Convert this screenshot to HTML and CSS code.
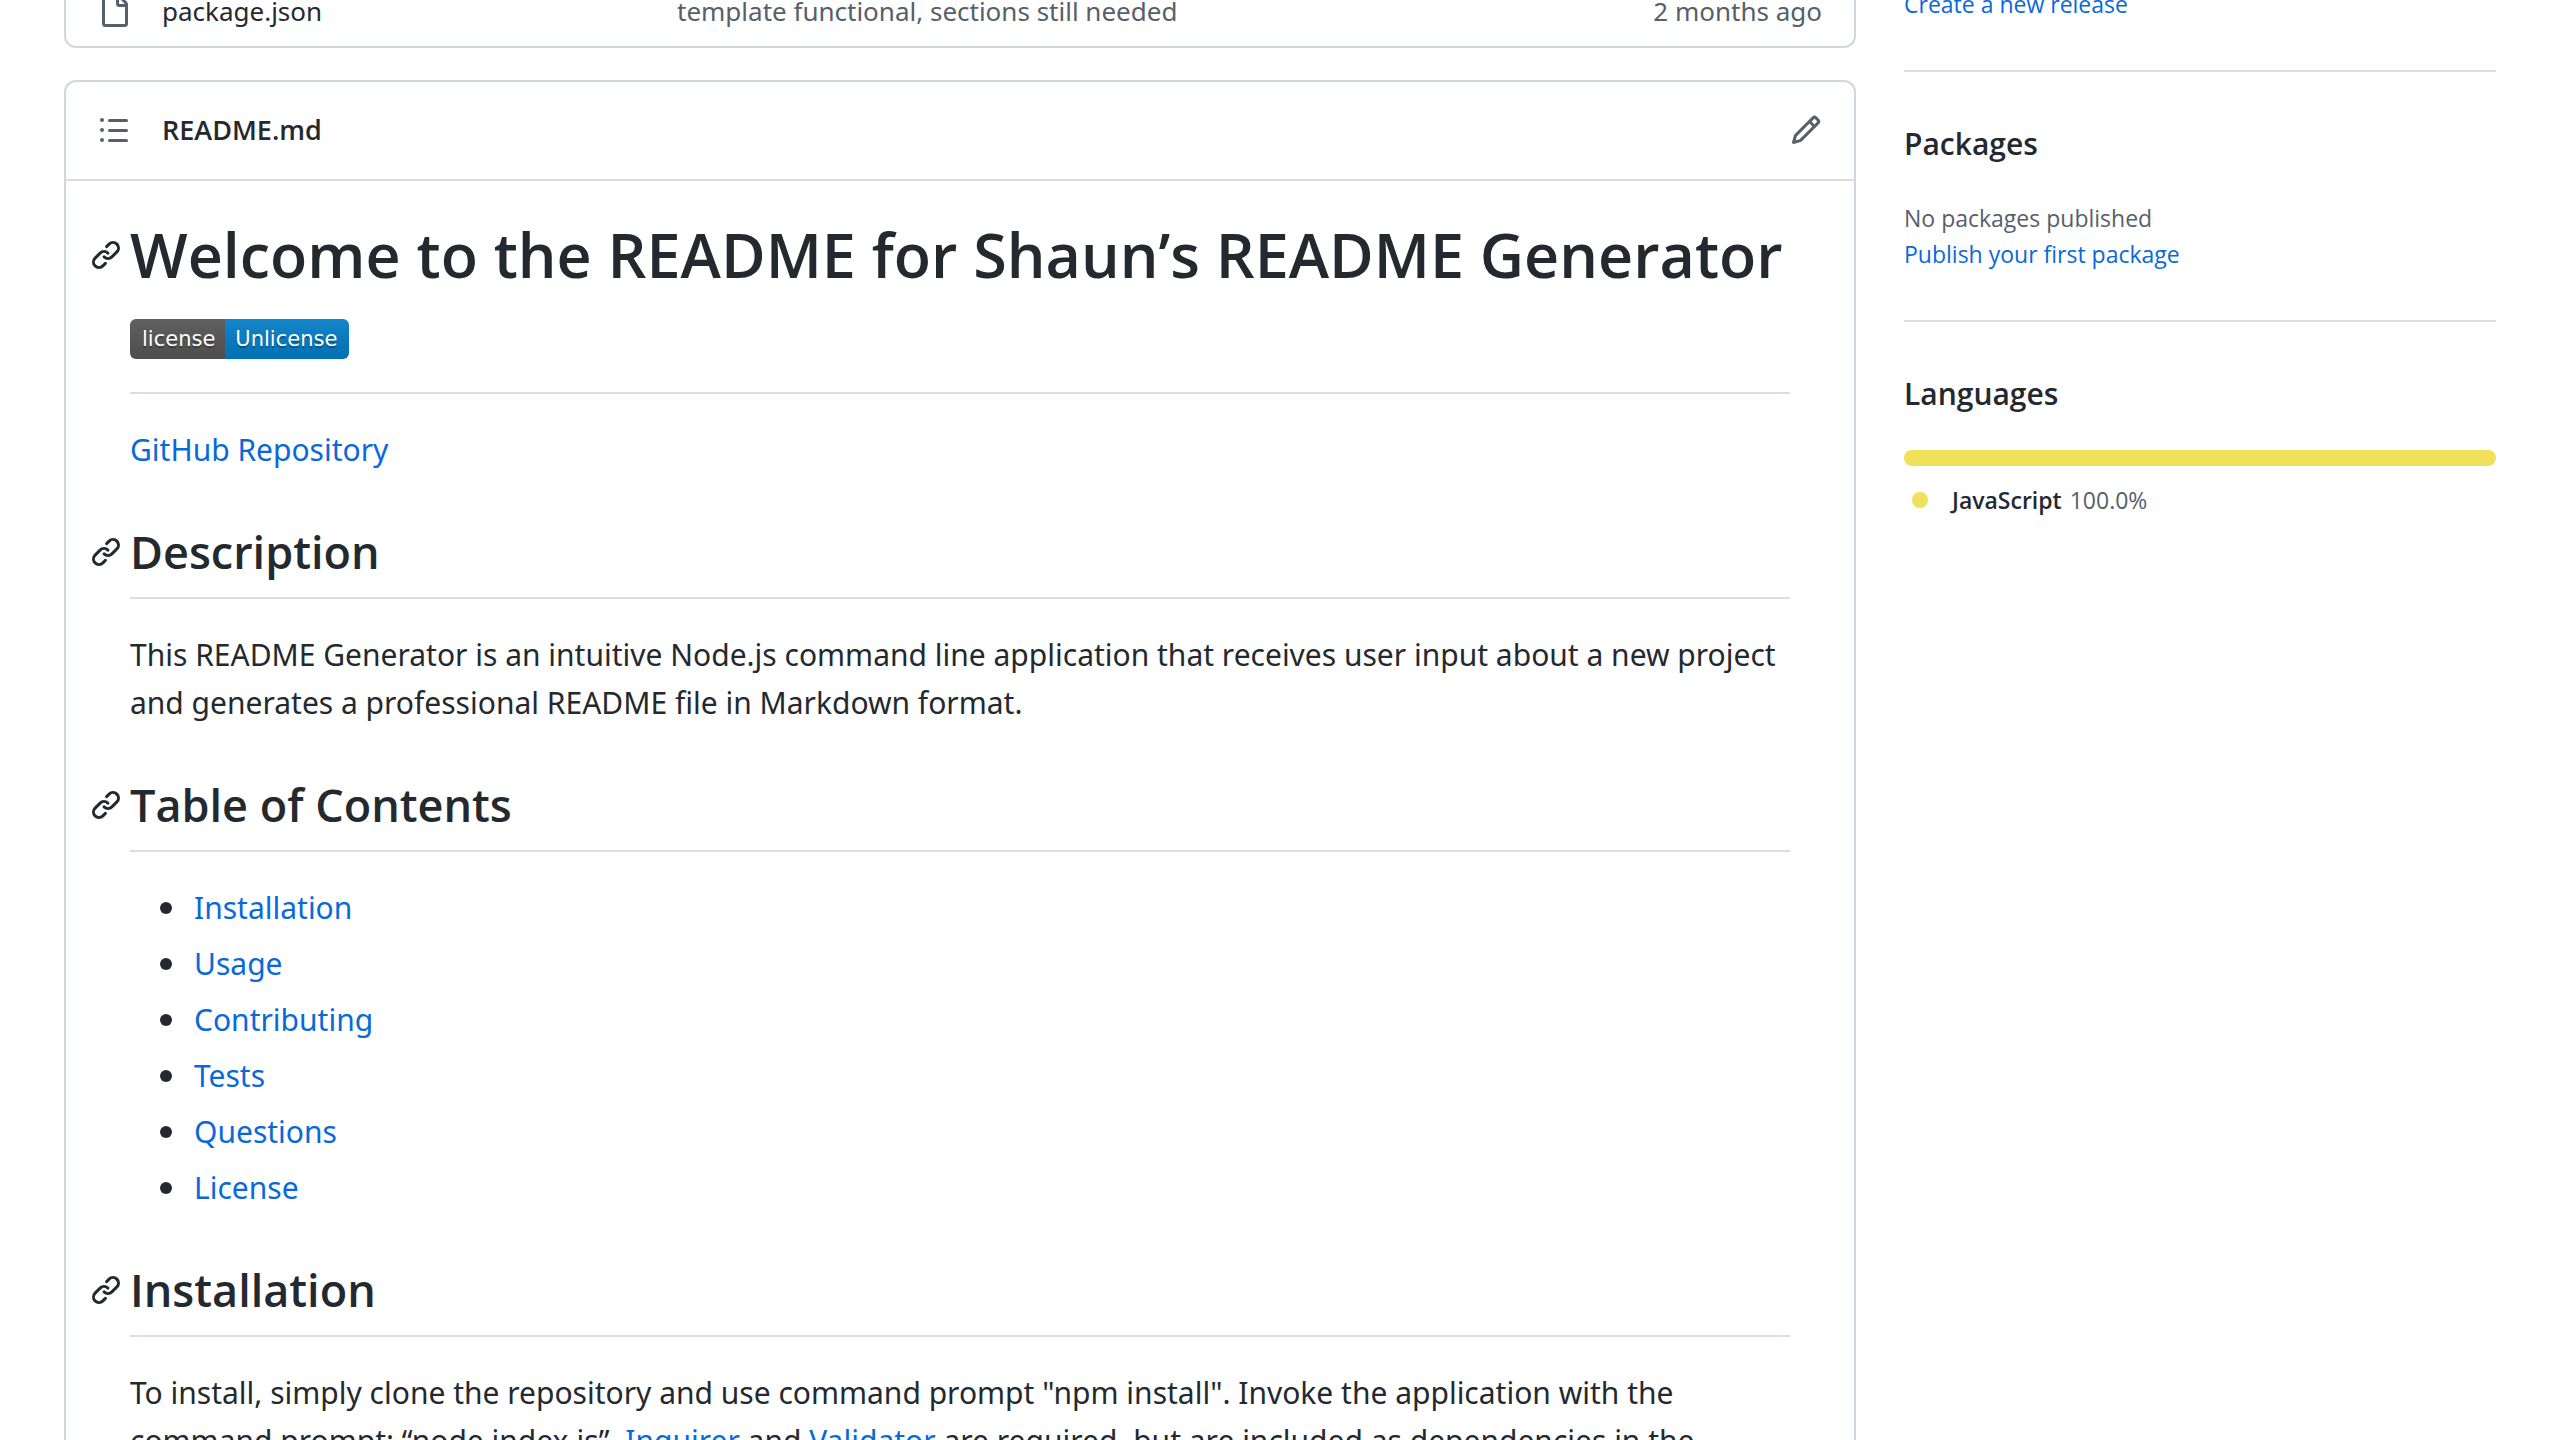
FILE: index.html
```html
<!DOCTYPE html>
<html lang="en">
<head>
<meta charset="utf-8">
<title>README Generator</title>
<link rel="stylesheet" href="styles.css">
</head>
<body>
<svg class="sprite" aria-hidden="true">
  <symbol id="icon-link" viewBox="0 0 16 16"><path d="m7.775 3.275 1.25-1.25a3.5 3.5 0 1 1 4.95 4.95l-2.5 2.5a3.5 3.5 0 0 1-4.95 0 .751.751 0 0 1 .018-1.042.751.751 0 0 1 1.042-.018 1.998 1.998 0 0 0 2.83 0l2.5-2.5a2.002 2.002 0 0 0-2.83-2.83l-1.25 1.25a.751.751 0 0 1-1.042-.018.751.751 0 0 1-.018-1.042Zm-4.69 9.64a1.998 1.998 0 0 0 2.83 0l1.25-1.25a.751.751 0 0 1 1.042.018.751.751 0 0 1 .018 1.042l-1.25 1.25a3.5 3.5 0 1 1-4.95-4.95l2.5-2.5a3.5 3.5 0 0 1 4.95 0 .751.751 0 0 1-.018 1.042.751.751 0 0 1-1.042.018 1.998 1.998 0 0 0-2.83 0l-2.5 2.5a1.998 1.998 0 0 0 0 2.83Z"/></symbol>
</svg>
<div class="page">
  <main class="main">
    <div class="card files">
      <table class="file-table">
        <tr>
          <td class="file-icon"><svg class="icon" viewBox="0 0 16 16" aria-hidden="true"><path d="M2 1.75C2 .784 2.784 0 3.75 0h6.586c.464 0 .909.184 1.237.513l2.914 2.914c.329.328.513.773.513 1.237v9.586A1.75 1.75 0 0 1 13.25 16h-9.5A1.75 1.75 0 0 1 2 14.25Zm1.75-.25a.25.25 0 0 0-.25.25v12.5c0 .138.112.25.25.25h9.5a.25.25 0 0 0 .25-.25V6h-2.75A1.75 1.75 0 0 1 9 4.25V1.5Zm6.75.062V4.25c0 .138.112.25.25.25h2.688l-.011-.013-2.914-2.914-.013-.011Z"/></svg></td>
          <td class="file-name"><a href="#package">package.json</a></td>
          <td class="file-message"><a href="#commit">template functional, sections still needed</a></td>
          <td class="file-age">2 months ago</td>
        </tr>
      </table>
    </div>

    <section class="card readme">
      <header class="readme-header">
        <button class="icon-button" type="button" aria-label="Table of contents"><svg class="icon" viewBox="0 0 16 16" aria-hidden="true"><path d="M5.75 2.5h8.5a.75.75 0 0 1 0 1.5h-8.5a.75.75 0 0 1 0-1.5Zm0 5h8.5a.75.75 0 0 1 0 1.5h-8.5a.75.75 0 0 1 0-1.5Zm0 5h8.5a.75.75 0 0 1 0 1.5h-8.5a.75.75 0 0 1 0-1.5ZM2 14a1 1 0 1 1 0-2 1 1 0 0 1 0 2Zm1-6a1 1 0 1 1-2 0 1 1 0 0 1 2 0ZM2 4a1 1 0 1 1 0-2 1 1 0 0 1 0 2Z"/></svg></button>
        <a class="readme-name" href="#readme">README.md</a>
        <button class="icon-button" type="button" aria-label="Edit this file"><svg class="icon" viewBox="0 0 16 16" aria-hidden="true"><path d="M11.013 1.427a1.75 1.75 0 0 1 2.474 0l1.086 1.086a1.75 1.75 0 0 1 0 2.474l-8.61 8.61c-.21.21-.47.364-.756.445l-3.251.93a.75.75 0 0 1-.927-.928l.929-3.25c.081-.286.235-.547.445-.758l8.61-8.61Zm.176 4.823L9.75 4.81l-6.286 6.287a.253.253 0 0 0-.064.108l-.558 1.953 1.953-.558a.253.253 0 0 0 .108-.064Zm1.238-3.763a.25.25 0 0 0-.354 0L10.811 3.75l1.439 1.44 1.263-1.263a.25.25 0 0 0 0-.354Z"/></svg></button>
      </header>
      <article class="markdown" id="readme">
        <div class="title-block">
          <h1 class="heading title"><a class="anchor" href="#readme" aria-label="Permalink"><svg class="icon"><use href="#icon-link"/></svg></a>Welcome to the README for Shaun’s README Generator</h1>
          <a class="badge" href="#license"><span class="badge-label">license</span><span class="badge-value">Unlicense</span></a>
        </div>
        <p><a href="#repo">GitHub Repository</a></p>

        <h2 class="heading" id="description"><a class="anchor" href="#description" aria-label="Permalink"><svg class="icon"><use href="#icon-link"/></svg></a>Description</h2>
        <p>This README Generator is an intuitive Node.js command line application that receives user input about a new project and generates a professional README file in Markdown format.</p>

        <h2 class="heading" id="contents"><a class="anchor" href="#contents" aria-label="Permalink"><svg class="icon"><use href="#icon-link"/></svg></a>Table of Contents</h2>
        <ul class="contents">
          <li><a href="#installation">Installation</a></li>
          <li><a href="#usage">Usage</a></li>
          <li><a href="#contributing">Contributing</a></li>
          <li><a href="#tests">Tests</a></li>
          <li><a href="#questions">Questions</a></li>
          <li><a href="#license">License</a></li>
        </ul>

        <h2 class="heading" id="installation"><a class="anchor" href="#installation" aria-label="Permalink"><svg class="icon"><use href="#icon-link"/></svg></a>Installation</h2>
        <p>To install, simply clone the repository and use command prompt "npm install". Invoke the application with the<br>command prompt: “node index.js”. <a href="#inquirer">Inquirer</a> and <a href="#validator">Validator</a> are required, but are included as dependencies in the</p>
      </article>
    </section>
  </main>

  <aside class="sidebar">
    <section class="side-section">
      <a href="#release">Create a new release</a>
    </section>
    <section class="side-section">
      <h2 class="side-title">Packages</h2>
      <p>No packages published</p>
      <a href="#publish">Publish your first package</a>
    </section>
    <section class="side-section">
      <h2 class="side-title">Languages</h2>
      <div class="language-bar"></div>
      <ul class="language-list">
        <li><span class="dot"></span><strong>JavaScript</strong> <span>100.0%</span></li>
      </ul>
    </section>
  </aside>
</div>
</body>
</html>
```
FILE: styles.css
```css
:root {
  --text: #24292f;
  --muted: #57606a;
  --link: #0969da;
  --border: #d0d7de;
  --rule: #d8dee4;
  --yellow: #f1e05a;
  --heading-font: "Open Sans", "Noto Sans", sans-serif;
}

* { box-sizing: border-box; }

body {
  margin: 0;
  height: 100vh;
  overflow: hidden;
  background: #fff;
  color: var(--text);
  font-family: "Noto Sans", "Open Sans", sans-serif;
  font-size: 30px;
  line-height: 48px;
}

a { color: var(--link); text-decoration: none; }

h1, h2, p, ul { margin: 0; }

.sprite { display: none; }

.icon { display: block; width: 32px; height: 32px; fill: currentColor; }

/* The page is scrolled part-way down the repository view. */
.page {
  display: grid;
  grid-template-columns: minmax(0, 1fr) 592px;
  gap: 48px;
  margin-top: -24px;
  padding: 0 64px;
}

.main { display: flex; flex-direction: column; gap: 32px; }

.card { border: 2px solid var(--border); border-radius: 12px; }

.files { border-top: 0; border-radius: 0 0 12px 12px; }

.file-table {
  width: 100%;
  table-layout: fixed;
  border-collapse: collapse;
  font-size: 26px;
  line-height: 42px;
  color: var(--muted);
}
.file-table td { padding: 14px 0; }
.file-table .file-icon { width: 96px; padding-left: 32px; }
.file-name { width: 515px; }
.file-name a { color: var(--text); }
.file-message a { color: var(--muted); }
.file-table .file-age { width: 300px; padding-right: 32px; text-align: right; }

.readme-header {
  display: flex;
  align-items: center;
  gap: 32px;
  padding: 27px 32px 28px;
  border-bottom: 2px solid var(--rule);
  font-family: var(--heading-font);
  font-size: 27px;
  line-height: 42px;
}
.readme-name { flex: 1; color: var(--text); font-weight: 600; }
.icon-button { padding: 0; border: 0; background: none; color: var(--muted); }

.markdown { padding: 34px 64px 64px; }

.heading {
  display: flex;
  align-items: center;
  margin-top: 48px;
  padding-bottom: 15px;
  border-bottom: 2px solid var(--rule);
  font-family: var(--heading-font);
  font-size: 45px;
  line-height: 60px;
  font-weight: 600;
}
.anchor { flex: none; margin-left: -40px; margin-right: 8px; color: var(--text); }

.title-block { padding-bottom: 33px; border-bottom: 2px solid var(--rule); }
.title {
  margin: 0 0 24px;
  padding: 0;
  border: 0;
  font-size: 61px;
  line-height: 80px;
  white-space: nowrap;
}

.badge {
  display: flex;
  width: max-content;
  overflow: hidden;
  border-radius: 6px;
  color: #fff;
  font-family: "DejaVu Sans", sans-serif;
  font-size: 21px;
  line-height: 40px;
  text-shadow: 0 2px 1px rgba(1, 1, 1, 0.3);
}
.badge-label { padding: 0 10px 0 12px; background: linear-gradient(#606060, #4d4d4d); }
.badge-value { padding: 0 12px 0 10px; background: linear-gradient(#1485c8, #0070b3); }

.heading + p, .heading + ul, .title-block + p { margin-top: 32px; }

.contents { padding-left: 30px; list-style: none; }
.contents li { display: flex; align-items: center; gap: 22px; }
.contents li + li { margin-top: 8px; }
.contents li::before {
  content: "";
  width: 12px;
  height: 12px;
  border-radius: 50%;
  background: var(--text);
}

.sidebar {
  padding-top: 10px;
  font-family: var(--heading-font);
  font-size: 23px;
  line-height: 36px;
  color: var(--muted);
}
.side-section { padding-bottom: 48px; }
.side-section + .side-section { padding-top: 48px; border-top: 2px solid var(--rule); }
.side-title {
  margin-bottom: 32px;
  color: var(--text);
  font-size: 30px;
  line-height: 48px;
  font-weight: 600;
}
.language-bar { height: 16px; border-radius: 8px; background: var(--yellow); }
.language-list { margin-top: 16px; padding: 0; list-style: none; }
.language-list li { display: flex; align-items: center; gap: 8px; }
.language-list strong { color: var(--text); font-weight: 600; }
.dot { width: 16px; height: 16px; margin: 0 16px 0 8px; border-radius: 50%; background: var(--yellow); }
```
